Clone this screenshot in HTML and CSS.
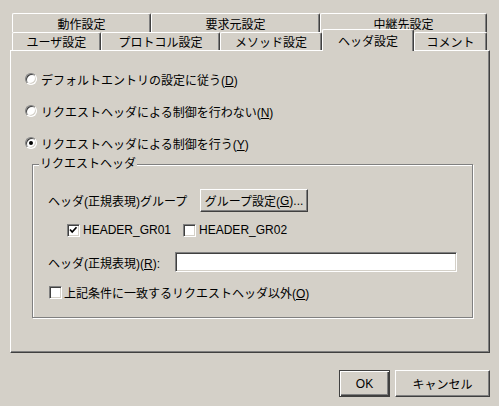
FILE: index.html
```html
<!DOCTYPE html>
<html lang="ja">
<head>
<meta charset="utf-8">
<title>ヘッダ設定</title>
<link rel="stylesheet" href="styles.css">
</head>
<body>
<div class="window">
  <div class="tabs">
    <div class="tabrow back">
      <div class="tab tb1">動作設定</div>
      <div class="tab tb2">要求元設定</div>
      <div class="tab tb3">中継先設定</div>
    </div>
    <div class="tabrow front">
      <div class="tab tf1">ユーザ設定</div>
      <div class="tab tf2">プロトコル設定</div>
      <div class="tab tf3">メソッド設定</div>
      <div class="tab tf4 selected">ヘッダ設定</div>
      <div class="tab tf5">コメント</div>
    </div>
  </div>
  <div class="panel">
    <div class="radio-row"><span class="radio"></span><span>デフォルトエントリの設定に従う(<u>D</u>)</span></div>
    <div class="radio-row"><span class="radio"></span><span>リクエストヘッダによる制御を行わない(<u>N</u>)</span></div>
    <div class="radio-row"><span class="radio checked"></span><span>リクエストヘッダによる制御を行う(<u>Y</u>)</span></div>
    <div class="group">
      <span class="legend">リクエストヘッダ</span>
      <div class="grow">
        <span class="glabel">ヘッダ(正規表現)グループ</span>
        <button class="btn gbtn">グループ設定(<u>G</u>)...</button>
      </div>
      <div class="crow">
        <span class="cb checked"><svg width="13" height="13" viewBox="0 0 13 13"><polyline points="3,5.5 5.2,8 9.5,3.2" fill="none" stroke="#000" stroke-width="1.7"/></svg></span>
        <span class="ctext">HEADER_GR01</span>
        <span class="cb cb2"></span>
        <span class="ctext">HEADER_GR02</span>
      </div>
      <div class="frow">
        <span class="flabel">ヘッダ(正規表現)(<u>R</u>):</span>
        <span class="field"></span>
      </div>
      <div class="crow last">
        <span class="cb"></span>
        <span class="ctext2">上記条件に一致するリクエストヘッダ以外(<u>O</u>)</span>
      </div>
    </div>
  </div>
  <div class="buttons">
    <button class="btn ok">OK</button>
    <button class="btn cancel">キャンセル</button>
  </div>
</div>
</body>
</html>
```
FILE: styles.css
```css
html, body {
  margin: 0;
  padding: 0;
  background: #d4d0c8;
}
body {
  width: 499px;
  height: 406px;
  overflow: hidden;
  font-family: "Liberation Sans", "Noto Sans CJK JP", sans-serif;
  font-size: 12px;
  color: #000;
}
u { text-decoration: underline; text-underline-offset: 1px; }
.window {
  padding-top: 13px;
}
.tabs { margin-left: 12px; }
.tabrow { display: flex; align-items: flex-start; }
.tabrow.back { height: 19px; }
.tabrow.front { height: 18px; }
.tab {
  box-sizing: border-box;
  height: 19px;
  border-top: 1px solid #fff;
  border-left: 1px solid #fff;
  border-right: 1px solid #404040;
  border-radius: 2px 2px 0 0;
  box-shadow: inset -1px 0 0 #808080;
  display: flex;
  align-items: center;
  justify-content: center;
  background: #d4d0c8;
  white-space: nowrap;
}
.front .tab { height: 18px; }
.tb1 { width: 139px; }
.tb2 { width: 169px; }
.tb3 { width: 167px; }
.tf1 { width: 89px; }
.tf2 { width: 119px; }
.tf3 { width: 102px; }
.tf4 { width: 92px; }
.tf5 { width: 73px; }
.front .tab.selected {
  height: 22px;
  margin-top: -3px;
  position: relative;
  z-index: 1;
  padding-bottom: 1px;
}
.panel {
  box-sizing: border-box;
  margin-left: 10px;
  width: 480px;
  height: 303px;
  border-top: 1px solid #fff;
  border-left: 1px solid #fff;
  border-right: 1px solid #404040;
  border-bottom: 1px solid #404040;
  box-shadow: inset -1px -1px 0 #808080;
  padding: 20px 0 0 14px;
}
.radio-row {
  display: flex;
  align-items: center;
  height: 16px;
  gap: 4px;
}
.radio-row + .radio-row { margin-top: 16px; }
.radio {
  box-sizing: border-box;
  width: 12px;
  height: 12px;
  border-radius: 50%;
  background: #fff;
  border: 1px solid;
  border-color: #808080 #fff #fff #808080;
  box-shadow: inset 1px 1px 0 #404040, inset -1px -1px 0 #d4d0c8;
  position: relative;
  flex: none;
}
.radio.checked::after {
  content: "";
  position: absolute;
  left: 3px;
  top: 3px;
  width: 4px;
  height: 4px;
  border-radius: 50%;
  background: #000;
}
.group {
  box-sizing: border-box;
  margin-top: 13px;
  margin-left: 7px;
  width: 441px;
  height: 154px;
  border: 1px solid #808080;
  box-shadow: inset 1px 1px 0 #fff, 1px 1px 0 #fff;
  position: relative;
  padding: 24px 0 0 15px;
}
.legend {
  position: absolute;
  top: -9px;
  left: 6px;
  line-height: 16px;
  padding: 0 1px;
  background: #d4d0c8;
}
.grow {
  display: flex;
  align-items: center;
  height: 23px;
}
.glabel { width: 152px; white-space: nowrap; }
.btn {
  box-sizing: border-box;
  font: inherit;
  color: #000;
  background: #d4d0c8;
  padding: 0;
  margin: 0;
  border: 1px solid;
  border-color: #fff #404040 #404040 #fff;
  box-shadow: inset -1px -1px 0 #808080;
  display: flex;
  align-items: center;
  justify-content: center;
  white-space: nowrap;
}
.gbtn { width: 108px; height: 23px; }
.crow {
  display: flex;
  align-items: center;
  height: 16px;
  margin-top: 10px;
  padding-left: 19px;
}
.cb {
  box-sizing: border-box;
  width: 13px;
  height: 13px;
  background: #fff;
  border: 1px solid;
  border-color: #808080 #fff #fff #808080;
  box-shadow: inset 1px 1px 0 #404040, inset -1px -1px 0 #d4d0c8;
  flex: none;
  position: relative;
}
.cb svg { position: absolute; left: -1px; top: -1px; }
.ctext { margin-left: 3px; }
.cb2 { margin-left: 12px; }
.frow {
  display: flex;
  align-items: center;
  height: 20px;
  margin-top: 14px;
}
.flabel { width: 127px; white-space: nowrap; }
.field {
  box-sizing: border-box;
  width: 282px;
  height: 20px;
  background: #fff;
  border: 1px solid;
  border-color: #808080 #fff #fff #808080;
  box-shadow: inset 1px 1px 0 #404040, inset -1px -1px 0 #d4d0c8;
}
.crow.last {
  margin-top: 12px;
  padding-left: 1px;
}
.ctext2 { margin-left: 2px; }
.buttons {
  display: flex;
  justify-content: flex-end;
  gap: 5px;
  margin-top: 17px;
  padding-right: 9px;
}
.ok {
  width: 51px;
  height: 27px;
  border: 1px solid #404040;
  box-shadow: inset 1px 1px 0 #fff, inset -1px -1px 0 #404040, inset -2px -2px 0 #808080;
}
.cancel { width: 95px; height: 27px; }
```
